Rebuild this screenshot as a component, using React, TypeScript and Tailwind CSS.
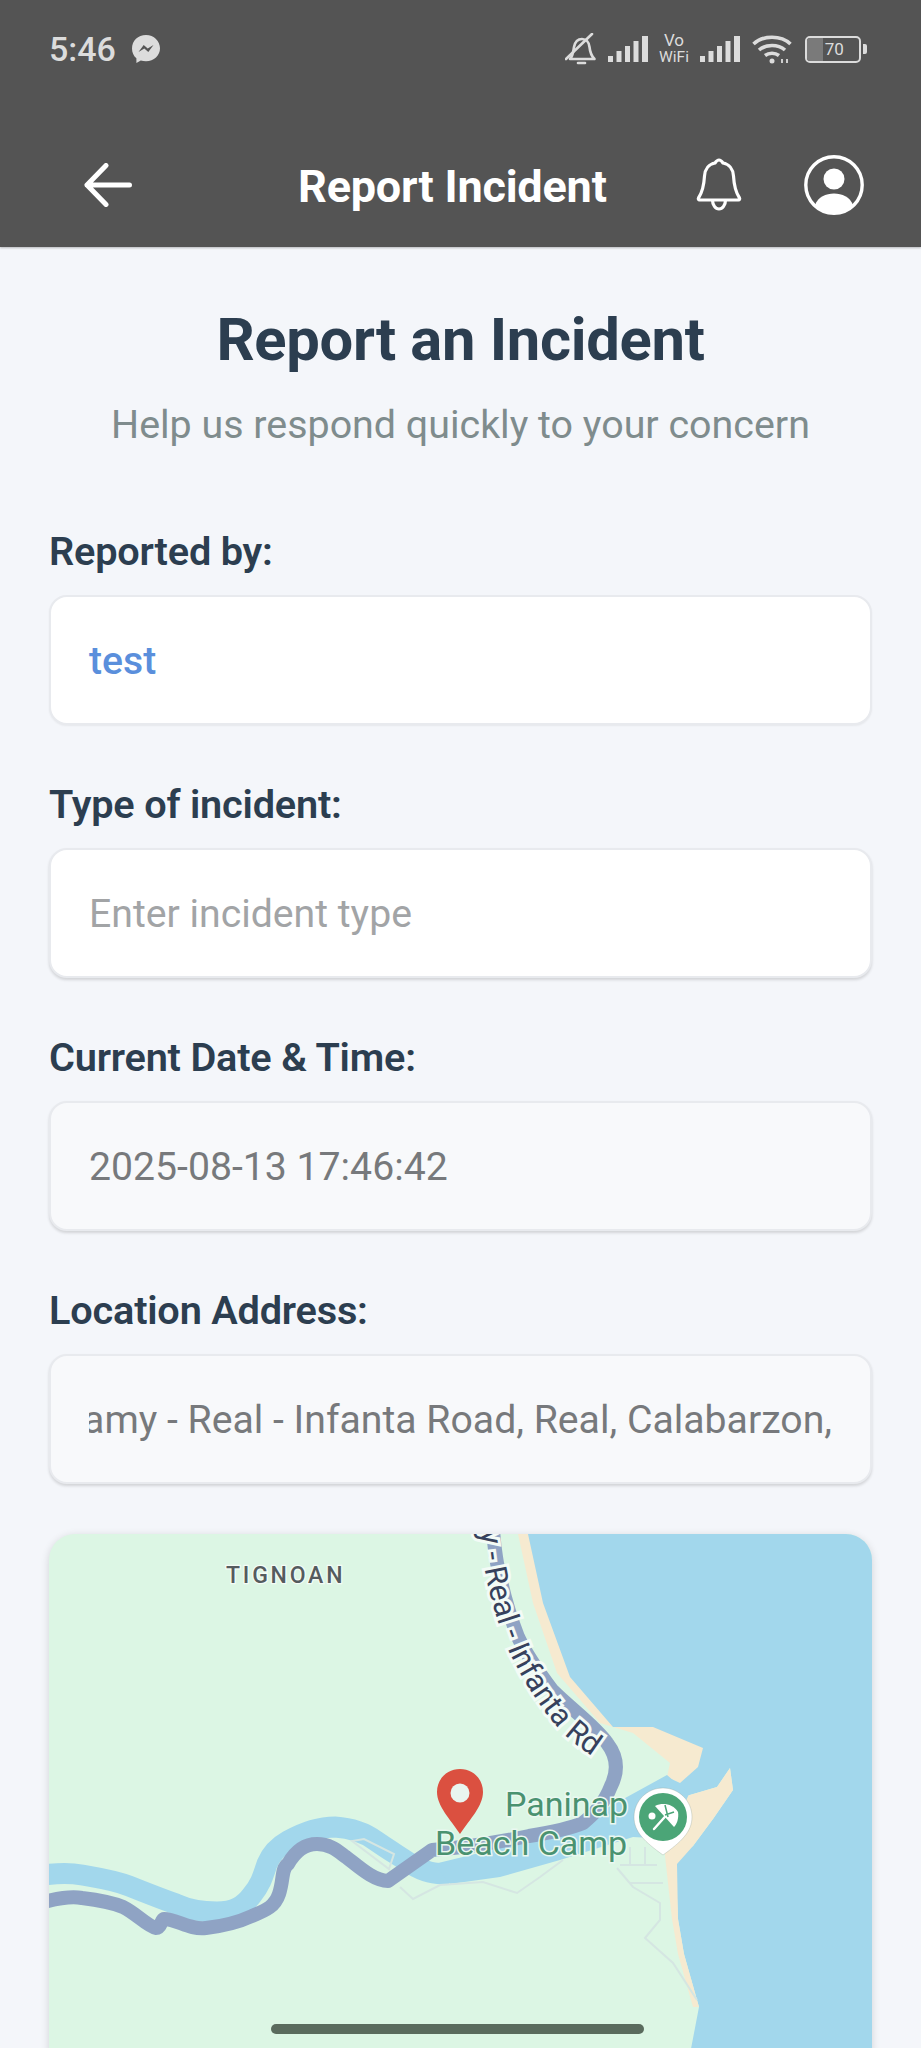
const fields = [
  { label: "Reported by:", value: "test", box: "bg-white shadow-[0_1px_2px_rgba(0,0,0,0.06)]", text: "font-medium text-[#5a8fdc]" },
  { label: "Type of incident:", value: "Enter incident type", box: "bg-white shadow-[0_2px_3px_rgba(0,0,0,0.14)]", text: "text-[#a2a4a6]" },
  { label: "Current Date & Time:", value: "2025-08-13 17:46:42", box: "bg-[#f8f9fb] shadow-[0_2px_3px_rgba(0,0,0,0.14)]", text: "text-[#77797c]" },
];

function SignalBars() {
  return (
    <svg viewBox="0 0 40 26" className="h-[26px] w-[40px]" fill="#dcdcdc">
      <rect x="0" y="20" width="5" height="6" />
      <rect x="8.5" y="15" width="5" height="11" />
      <rect x="17" y="10" width="5" height="16" />
      <rect x="25.5" y="5" width="5" height="21" />
      <rect x="34" y="0" width="6" height="26" />
    </svg>
  );
}

function StatusBar() {
  return (
    <div className="flex h-[97px] items-center pl-[49px] pt-[1px] text-[#dcdcdc]">
      <span className="w-[83px] text-[34px] font-medium leading-none">5:46</span>
      <svg viewBox="0 0 28 28" className="h-[28px] w-[28px]">
        <path d="M14 0C6 0 0 5.8 0 13.4c0 4 1.7 7.5 4.4 9.9V28l4.4-2.4c1.6.5 3.3.7 5.2.7 8 0 14-5.8 14-13S22 0 14 0z" fill="#dcdcdc" />
        <path d="M6.5 17l5.2-7 4 3.4 5.8-3.4-5.2 7-4-3.4z" fill="#545454" />
      </svg>
      <svg viewBox="0 0 32 33" className="ml-[405px] h-[33px] w-[32px]" fill="none" stroke="#dcdcdc" strokeWidth="2.6" strokeLinecap="round" strokeLinejoin="round">
        <path d="M5 26c3-3 3-6 4-12 1-5 4-8 8-8s7 3 7.500 8c.5 5 2 9 5 12z" />
        <path d="M13 30h7" strokeWidth="2.600" />
        <path d="M1 26L27 1" />
      </svg>
      <div className="ml-[11px]">
        <SignalBars />
      </div>
      <div className="ml-[7px] flex w-[38px] flex-col items-center">
        <span className="text-[17px] leading-[17px]">Vo</span>
        <span className="text-[15.5px] leading-[17px]">WiFi</span>
      </div>
      <div className="ml-[7px]">
        <SignalBars />
      </div>
      <svg viewBox="0 0 40 30" className="ml-[12px] h-[30px] w-[40px]" fill="none" stroke="#dcdcdc" strokeWidth="3.600">
        <path d="M1.500 10C11 1 29 1 38.500 10" />
        <path d="M7 16c7-6 19-6 26 0" />
        <path d="M13 21.500c4-3 10-3 14 0" />
        <circle cx="20" cy="27" r="2.500" fill="#dcdcdc" stroke="none" />
        <path d="M30 29v-4M35 25v4" strokeWidth="1.800" />
      </svg>
      <div className="ml-[13px] flex items-center">
        <div className="flex h-[27px] w-[56px] items-center justify-center overflow-hidden rounded-[5px] border-2 border-[#dcdcdc] text-[17px] leading-none">
          <div className="flex h-full w-[30%] shrink-0 bg-[#7a7a7a]" />
          <span className="-ml-[5px] flex-1 pr-[8px] text-center">70</span>
        </div>
        <div className="ml-[2px] h-[10px] w-[4px] rounded-r-[2px] bg-[#dcdcdc]" />
      </div>
    </div>
  );
}

function NavBar() {
  return (
    <div className="flex h-[150px] items-start pl-[84px] pt-[58px] text-white">
      <svg viewBox="0 0 48 44" className="mt-[8px] h-[44px] w-[48px]" fill="none" stroke="white" strokeWidth="5" strokeLinecap="round" strokeLinejoin="round">
        <path d="M22 2.500L3 22l19 19.500M3 22h42.500" />
      </svg>
      <h1 className="ml-[166px] mt-[9px] w-[309px] whitespace-nowrap text-[45px] font-bold leading-[46px] tracking-[-0.2px]">Report Incident</h1>
      <svg viewBox="0 0 46 53" className="ml-[89px] mt-[3px] h-[53px] w-[46px]" fill="none" stroke="white" strokeWidth="3.200" strokeLinejoin="round">
        <path d="M23 2c2 0 3 1.500 4 3 6 1 10 6 10.500 13 .5 9 2 16 6 22 .5 1 0 2-1 2h-39c-1 0-1.500-1-1-2 4-6 5.500-13 6-22C9 11 13 6 19 5c1-1.500 2-3 4-3z" />
        <path d="M16.500 42c0 5 3 9 6.500 9s6.500-4 6.500-9" />
      </svg>
      <svg viewBox="0 0 60 60" className="ml-[62px] h-[60px] w-[60px]" fill="none">
        <circle cx="30" cy="30" r="28.200" stroke="white" strokeWidth="3.400" />
        <circle cx="30" cy="24" r="10.500" fill="white" />
        <path d="M11 50c3-8 11-11.500 19-11.500S46 42 49 50c-5 5-11.500 8-19 8s-14-3-19-8z" fill="white" />
      </svg>
    </div>
  );
}

function Field({ label, children, box }: { label: string; children: React.ReactNode; box: string }) {
  return (
    <div>
      <label className="block h-[45px] text-[39.7px] font-semibold leading-[45px] tracking-[-0.2px] text-[#2c3e50]">{label}</label>
      <div className={`mt-[21px] flex h-[130px] items-center overflow-hidden rounded-[18px] border-2 border-[#e8eaee] px-[38px] pt-[2px] text-[39.2px] ${box}`}>
        {children}
      </div>
    </div>
  );
}

const roadPoints =
  "M-5 368C10 364 22 362 33 364C50 366 62 368 74 373C88 380 98 392 107 394C112 394 112 386 115 385C128 385 140 396 157 394C175 392 190 388 203 382C218 376 226 372 230 360C235 345 232 335 239 330C247 316 256 310 268 310C282 310 290 318 297 323C310 333 325 347 339 347L383 316C410 314 450 308 480 302C505 298 520 295 534 289C545 280 555 270 562 252C570 236 568 222 558 209C546 192 522 175 503 156C491 140 478 122 469 103C460 80 453 55 448 29C446 18 445 8 444 -4";

function MapPreview() {
  return (
    <div className="h-[520px] overflow-hidden rounded-t-[26px] bg-[#dcf6e4] shadow-[0_2px_8px_rgba(0,0,0,0.14)]">
      <svg viewBox="0 0 823 520" className="block h-[520px] w-[823px]" style={{ fontFamily: "Roboto, sans-serif" }}>
        <path d="M469 0L484 69L508 139L551 189L584 199L621 229L618 243L631 249L660 240L660 0z" fill="#f6ead0" />
        <path
          d="M479 0L494 69L521 143L564 193L604 193L654 214L649 233L631 249L618 243L634 263L668 253L681 234L684 256L664 285L644 312L626 322L629 385L635 420L650 473L641 520L823 520L823 0z"
          fill="#a2d7ec"
        />
        <path d="M615 262L634 263L668 253L681 234L684 256L664 285L644 312L628 330L629 385L635 420L650 473L644 473L629 420L623 385L616 322z" fill="#f6ead0" />
        <path
          d="M-5 341C10 339 22 339 33 341C50 344 65 346 80 352C95 358 110 364 127 370C140 376 155 378 168 378C185 378 195 372 203 361C212 350 214 342 218 330C222 320 230 312 239 307C255 298 270 293 286 293C302 294 315 298 327 307C340 316 350 322 362 330C375 338 385 340 400 340"
          fill="none"
          stroke="#a2d7ec"
          strokeWidth="21"
        />
        <path d="M385 330L484 306L531 289L578 263L618 241L640 260L620 305L584 303L511 326L451 343L401 350z" fill="#a2d7ec" />
        <g fill="none" stroke="#d5e6e2" strokeWidth="2">
          <path d="M351 353L364 365L391 351L434 348L468 359L491 343L514 326" />
          <path d="M568 334L584 353L611 369L611 386L596 404L624 429L648 466" />
          <path d="M581 349H614M571 331H608M596 313V331M581 313V331" />
          <path d="M303 307L340 335L345 320L315 305z" />
        </g>
        <path d={roadPoints} fill="none" stroke="#8fa3c4" strokeWidth="14" strokeLinejoin="round" />
        <path id="road-label" d="M431 -3L436 36C440 60 448 88 460 118C472 142 488 170 510 195C524 210 545 225 575 240" fill="none" />
        <text fontSize="30.5" fill="#36415c" stroke="#f3fbf6" strokeWidth="6" paintOrder="stroke">
          <textPath href="#road-label">y - Real - Infanta Rd</textPath>
        </text>
        <text x="177" y="49" fontSize="23" fontWeight="500" letterSpacing="2.800" fill="#555b5e" stroke="#ffffff" strokeWidth="2.500" paintOrder="stroke" strokeOpacity="0.7">
          TIGNOAN
        </text>
        <path d="M411 235C424 235 434 245 434 258C434 272 421 285 411 300C401 285 388 272 388 258C388 245 398 235 411 235z" fill="#db5040" />
        <circle cx="411" cy="259" r="9.500" fill="#e9f5ef" />
        <g fontSize="34" fill="#4a9270" stroke="#eaf8f0" strokeWidth="3" paintOrder="stroke">
          <text x="456" y="282">Paninap</text>
          <text x="386" y="321">Beach Camp</text>
        </g>
        <path d="M614 254C630 254 643 267 643 283C643 298 632 308 614 321C596 308 585 298 585 283C585 267 598 254 614 254z" fill="white" stroke="#8a9a90" strokeOpacity="0.3" />
        <circle cx="614" cy="283" r="24" fill="#4ba577" />
        <g fill="none" stroke="white" strokeWidth="2.400">
          <path d="M605 295L622 276" strokeLinecap="round" />
          <path d="M606 272C614 268 624 270 629 278C630 284 628 290 625 293z" fill="white" stroke="none" />
          <path d="M616 271L619 283M625 278L616 281" stroke="#4ba577" strokeWidth="1.500" />
        </g>
        <circle cx="603" cy="282" r="3.500" fill="white" />
      </svg>
    </div>
  );
}

export default function App() {
  return (
    <div className="relative h-[2048px] overflow-hidden bg-[#f4f6fa] font-['Roboto',sans-serif]">
      <header className="h-[247px] bg-[#545454] shadow-[0_1px_2px_rgba(0,0,0,0.25)]">
        <StatusBar />
        <NavBar />
      </header>

      <main className="px-[49px]">
        <h2 className="mt-[64px] text-center text-[59.7px] font-bold leading-[58px] tracking-[-0.3px] text-[#2c3e50]">Report an Incident</h2>
        <p className="mt-[30px] text-center text-[39.4px] leading-[52px] text-[#7f8c8d]">Help us respond quickly to your concern</p>

        <div className="mt-[78px] flex flex-col gap-[57px]">
          {fields.map((field) => (
            <Field key={field.label} label={field.label} box={field.box}>
              <span className={field.text}>{field.value}</span>
            </Field>
          ))}
          <Field label="Location Address:" box="bg-[#f8f9fb] shadow-[0_2px_3px_rgba(0,0,0,0.14)]">
            <div className="flex w-full justify-end overflow-hidden whitespace-nowrap text-[#77797c]">
              <span className="shrink-0">Famy - Real - Infanta Road, Real, Calabarzon,</span>
            </div>
          </Field>
        </div>

        <div className="mt-[50px]">
          <MapPreview />
        </div>
      </main>

      <div className="absolute bottom-[14px] left-[271px] h-[10px] w-[373px] rounded-full bg-[#5a6b5d]" />
    </div>
  );
}
